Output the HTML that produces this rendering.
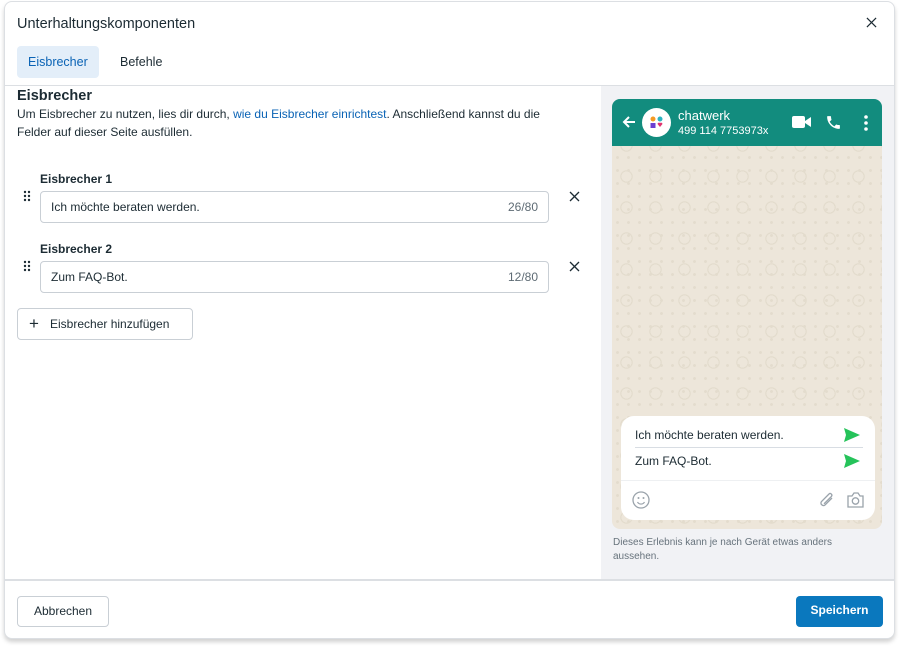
<!DOCTYPE html>
<html><head><meta charset="utf-8"><style>
*{box-sizing:border-box;margin:0;padding:0}
body{width:900px;height:647px;background:#fff;font-family:"Liberation Sans",sans-serif;color:#1c2b33;position:relative;overflow:hidden}
.modal{position:absolute;left:4px;top:1px;width:891px;height:638px;border:1px solid #dcdfe3;border-radius:8px;background:#fff;box-shadow:0 3px 4px rgba(0,0,0,.18);overflow:hidden}
.title{position:absolute;left:12px;top:14px;font-size:14.5px}
.close{position:absolute;left:861px;top:15px}
.tab{position:absolute;top:44px;height:32px;line-height:32px;font-size:12.5px;padding:0 11px;border-radius:4px}
.t1{left:12px;background:#e3eef9;color:#0a63b5}
.t2{left:104px;color:#1c2b33}
.hr1{position:absolute;left:0;top:83px;width:891px;height:1px;background:#dcdfe3}
.right{position:absolute;left:596px;top:84px;width:295px;height:493px;background:#f1f2f5}
.hr2{position:absolute;left:0;top:577px;width:891px;height:2px;background:#dcdfe3}
h2{position:absolute;left:12px;top:86px;font-size:14.5px;font-weight:600}
.desc{position:absolute;left:12px;top:103px;font-size:12px;line-height:18px;width:558px}
.desc a{color:#0a63b5;text-decoration:none}
.lbl{position:absolute;left:35px;font-size:12px;font-weight:600}
.inp{position:absolute;left:35px;width:509px;height:32px;border:1px solid #c9cfd5;border-radius:4px;font-size:12px;line-height:30px;padding:0 10px}
.inp span{position:absolute;right:10px;color:#5e6b74}
.drag{position:absolute;left:18px;width:8px}
.x{position:absolute;left:564px}
.add{position:absolute;left:12px;top:306px;width:176px;height:32px;border:1px solid #c9cfd5;border-radius:4px;font-size:12px;line-height:30px;padding-left:32px}
.add:before{content:"+";position:absolute;left:11px;top:0;font-size:17px;font-weight:300}
.phone{position:absolute;left:612px;top:99px;width:270px;height:430px;border-radius:8px;overflow:hidden;background:#ede6da;
background-image:radial-gradient(circle,#e3dccd 1.2px,transparent 1.7px),radial-gradient(circle,transparent 5px,#e3dccd 5px,#e3dccd 6px,transparent 6.5px);background-size:11px 13px,29px 31px}
.ph{position:absolute;left:0;top:0;width:270px;height:47px;background:#128c7e;color:#fff}
.av{position:absolute;left:30px;top:9px;width:29px;height:29px;border-radius:50%;background:#fff}
.card{position:absolute;left:9px;top:317px;width:254px;height:104px;background:#fff;border-radius:13px;font-size:12px}
.foot{position:absolute;left:613px;top:536px;font-size:10px;line-height:14px;color:#67737c;width:260px}
.btn{position:absolute;top:594px;height:31px;border-radius:4px;font-size:12px;line-height:29px;text-align:center}
</style></head><body>
<div class="modal">
<div class="title">Unterhaltungskomponenten</div>
<svg class="close" width="11" height="11" viewBox="0 0 12 12"><path d="M1 1L11 11M11 1L1 11" stroke="#1c2b33" stroke-width="1.3"/></svg>
<div class="tab t1">Eisbrecher</div><div class="tab t2">Befehle</div>
<div class="hr1"></div>
<div class="right"></div>
<h2>Eisbrecher</h2>
<div class="desc">Um Eisbrecher zu nutzen, lies dir durch, <a>wie du Eisbrecher einrichtest</a>. Anschließend kannst du die Felder auf dieser Seite ausfüllen.</div>
<div class="lbl" style="top:170px">Eisbrecher 1</div>
<div class="inp" style="top:189px">Ich möchte beraten werden.<span>26/80</span></div>
<div class="lbl" style="top:240px">Eisbrecher 2</div>
<div class="inp" style="top:259px">Zum FAQ-Bot.<span>12/80</span></div>
<svg class="drag" style="top:188px" width="8" height="12"><g fill="#1c2b33"><circle cx="2" cy="2" r="1.2"/><circle cx="6" cy="2" r="1.2"/><circle cx="2" cy="6" r="1.2"/><circle cx="6" cy="6" r="1.2"/><circle cx="2" cy="10" r="1.2"/><circle cx="6" cy="10" r="1.2"/></g></svg>
<svg class="drag" style="top:258px" width="8" height="12"><g fill="#1c2b33"><circle cx="2" cy="2" r="1.2"/><circle cx="6" cy="2" r="1.2"/><circle cx="2" cy="6" r="1.2"/><circle cx="6" cy="6" r="1.2"/><circle cx="2" cy="10" r="1.2"/><circle cx="6" cy="10" r="1.2"/></g></svg>
<svg class="x" style="top:189px" width="11" height="11"><path d="M1 1L10 10M10 1L1 10" stroke="#1c2b33" stroke-width="1.3"/></svg>
<svg class="x" style="top:259px" width="11" height="11"><path d="M1 1L10 10M10 1L1 10" stroke="#1c2b33" stroke-width="1.3"/></svg>
<div class="add">Eisbrecher hinzufügen</div>
<div class="hr2"></div>
<div class="btn" style="left:12px;width:92px;border:1px solid #c9cfd5">Abbrechen</div>
<div class="btn" style="left:791px;width:87px;background:#0a78be;color:#fff;font-weight:600">Speichern</div>
</div>
<div class="phone">
<div class="ph">
<svg style="position:absolute;left:10px;top:16px" width="14" height="14"><path d="M13 7H2M7 2L2 7L7 12" stroke="#fff" stroke-width="2" fill="none"/></svg>
<div class="av"><svg width="29" height="29"><circle cx="11" cy="11" r="2.5" fill="#f59a23"/><circle cx="18" cy="11" r="2.5" fill="#2bb3c0"/><rect x="8.5" y="15" width="5" height="5" fill="#6b3fd1"/><path d="M15.5 16a1.5 1.5 0 0 1 2.5-1a1.5 1.5 0 0 1 2.5 1l-2.5 3z" fill="#e0336e"/></svg></div>
<div style="position:absolute;left:66px;top:9px;font-size:13px">chatwerk</div>
<div style="position:absolute;left:66px;top:26px;font-size:11px">499 114 7753973x</div>
<svg style="position:absolute;left:180px;top:16px" width="20" height="14"><rect x="0" y="1" width="13" height="12" rx="2" fill="#fff"/><path d="M13 6L19 2V12L13 8z" fill="#fff"/></svg>
<svg style="position:absolute;left:213px;top:15px" width="17" height="17" viewBox="0 0 24 24"><path fill="#fff" d="M6.6 10.8c1.4 2.8 3.8 5.1 6.6 6.6l2.2-2.2c.3-.3.7-.4 1-.2 1.1.4 2.3.6 3.6.6.6 0 1 .4 1 1V20c0 .6-.4 1-1 1C10.6 21 3 13.4 3 4c0-.6.4-1 1-1h3.5c.6 0 1 .4 1 1 0 1.3.2 2.5.6 3.6.1.3 0 .7-.2 1z"/></svg>
<svg style="position:absolute;left:252px;top:16px" width="4" height="16"><circle cx="2" cy="2" r="1.8" fill="#fff"/><circle cx="2" cy="8" r="1.8" fill="#fff"/><circle cx="2" cy="14" r="1.8" fill="#fff"/></svg>
</div>
<div class="card">
<div style="position:absolute;left:14px;top:12px">Ich möchte beraten werden.</div>
<div style="position:absolute;left:14px;top:31px;width:228px;height:1px;background:#d8dde3"></div>
<div style="position:absolute;left:14px;top:38px">Zum FAQ-Bot.</div>
<svg style="position:absolute;left:222px;top:11px" width="18" height="16"><path d="M1 1L17 8L1 15L3 8z" fill="#25c35a"/></svg>
<svg style="position:absolute;left:222px;top:37px" width="18" height="16"><path d="M1 1L17 8L1 15L3 8z" fill="#25c35a"/></svg>
<div style="position:absolute;left:0;top:64px;width:254px;height:1px;background:#eef0f2"></div>
<svg style="position:absolute;left:11px;top:75px" width="18" height="18"><circle cx="9" cy="9" r="8" fill="none" stroke="#9aa3ab" stroke-width="1.3"/><circle cx="6.5" cy="7" r="1" fill="#9aa3ab"/><circle cx="11.5" cy="7" r="1" fill="#9aa3ab"/><path d="M5.5 11a4 4 0 0 0 7 0" fill="none" stroke="#9aa3ab" stroke-width="1.2"/></svg>
<svg style="position:absolute;left:197px;top:76px" width="18" height="18"><path d="M14 6L7 13a2.5 2.5 0 0 1-3.5-3.5L11 2a1.7 1.7 0 0 1 2.4 2.4L6 11.8" fill="none" stroke="#9aa3ab" stroke-width="1.3"/></svg>
<svg style="position:absolute;left:225px;top:75px" width="19" height="18"><path d="M2 5h4l2-3h4l2 3h3v11H2z" fill="none" stroke="#9aa3ab" stroke-width="1.3"/><circle cx="9.5" cy="10" r="3.2" fill="none" stroke="#9aa3ab" stroke-width="1.3"/></svg>
</div>
</div>
<div class="foot">Dieses Erlebnis kann je nach Gerät etwas anders aussehen.</div>
</body></html>
